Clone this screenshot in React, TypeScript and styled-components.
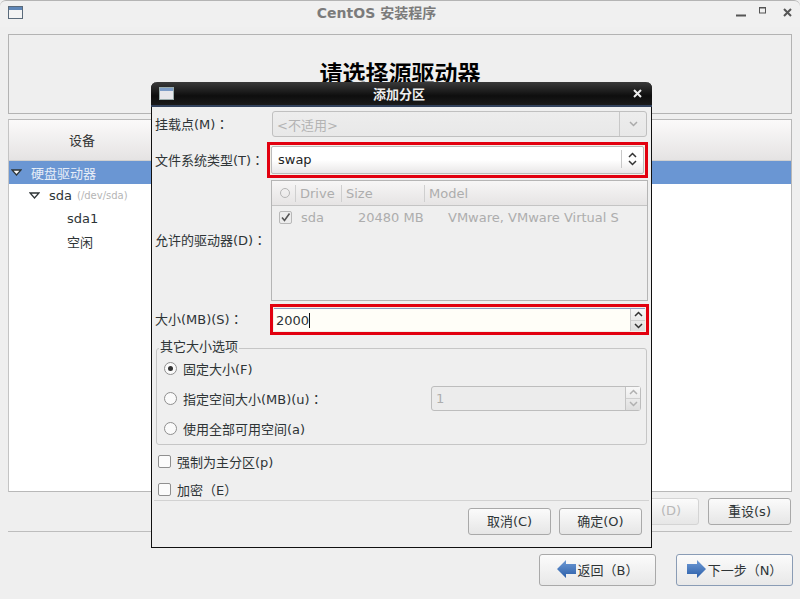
import React from "react";
import styled, { createGlobalStyle } from "styled-components";

const Global = createGlobalStyle`
  html, body { margin: 0; padding: 0; background: #efefef; }
  body { font-family: "DejaVu Sans", "Noto Sans CJK SC", sans-serif; font-size: 13px; color: #2e3436; }
  * { box-sizing: border-box; }
`;

const Screen = styled.div`
  position: relative;
  width: 800px;
  height: 599px;
  overflow: hidden;
  background: #efefef;
  display: flex;
  flex-direction: column;
`;

const TitleBar = styled.div`
  height: 27px;
  flex: none;
  border-top: 1px solid #b4b4b4;
  border-radius: 6px 6px 0 0;
  display: flex;
  align-items: center;
  padding: 0 8px 4px;
  background: #f0f0f0;
`;
const TitleText = styled.div`
  flex: 1;
  text-align: center;
  font-weight: bold;
  color: #7b7b7b;
  font-size: 14px;
  padding-right: 6px;
`;
const WinButtons = styled.div`
  display: flex;
  align-items: center;
  gap: 0;
  color: #555;
`;

const Content = styled.div`
  flex: 1;
  display: flex;
  flex-direction: column;
  padding: 7px 8px 0;
`;
const Banner = styled.div`
  height: 80px;
  flex: none;
  border: 1px solid #b3b3b3;
  display: flex;
  align-items: flex-end;
  justify-content: center;
  padding-bottom: 25px;
`;
const Heading = styled.h1`
  margin: 0;
  font-size: 23px;
  line-height: 28px;
  font-weight: bold;
  color: #000;
`;
const TreePanel = styled.div`
  margin-top: 5px;
  height: 373px;
  flex: none;
  border: 1px solid #b8b8b8;
  border-left-color: #c4c4c4;
  background: #fff;
`;
const ColumnHeader = styled.div`
  height: 41px;
  padding: 0 0 2px 60px;
  display: flex;
  align-items: center;
  background: linear-gradient(#fbfafa, #e5e3e3);
  border-bottom: 1px solid #d0d0d0;
  color: #333;
`;
const TreeRow = styled.div<{ $selected?: boolean; $indent: number }>`
  height: 23px;
  display: flex;
  align-items: center;
  gap: 9px;
  padding-left: ${(p) => p.$indent}px;
  background: ${(p) => (p.$selected ? "#6a96d3" : "transparent")};
  color: ${(p) => (p.$selected ? "#e6edf7" : "#2e3436")};
`;
const DevPath = styled.span`
  font-size: 10px;
  color: #b5b5b5;
  margin-left: -4px;
`;
const ActionRow = styled.div`
  margin-top: 6px;
  height: 28px;
  flex: none;
  display: flex;
  justify-content: flex-end;
  gap: 9px;
  padding-right: 1px;
`;
const Button = styled.button<{ $width?: number; $disabled?: boolean }>`
  width: ${(p) => p.$width ?? 83}px;
  height: 27px;
  border: 1px solid ${(p) => (p.$disabled ? "#d4d4d4" : "#a9a9a9")};
  border-radius: 3px;
  background: linear-gradient(#fbfbfb, #e6e6e6);
  color: ${(p) => (p.$disabled ? "#b8b8b8" : "#2e3436")};
  font: inherit;
  padding: 0 0 2px ${(p) => (p.$disabled ? 27 : 0)}px;
  display: flex;
  align-items: center;
  justify-content: center;
`;
const Separator = styled.div`
  height: 1px;
  flex: none;
  margin-top: 5px;
  background: #bdbdbd;
`;
const NavRow = styled.div`
  margin-top: 22px;
  display: flex;
  justify-content: flex-end;
  gap: 20px;
  margin-right: -1px;
`;
const NavButton = styled.button<{ $focus?: boolean }>`
  width: 117px;
  height: 32px;
  border: 1px solid ${(p) => (p.$focus ? "#8a9cb5" : "#a9a9a9")};
  border-radius: 3px;
  background: linear-gradient(#fbfbfb, #e8e8e8);
  color: #2e3436;
  font: inherit;
  padding: 0 0 2px;
  display: flex;
  align-items: center;
  justify-content: center;
  gap: 2px;
`;

const Dialog = styled.div`
  position: absolute;
  left: 151px;
  top: 82px;
  width: 501px;
  height: 466px;
  border: 1px solid #111;
  border-top: none;
  border-radius: 6px 6px 0 0;
  background: #efefef;
  display: flex;
  flex-direction: column;
`;
const DialogTitle = styled.div`
  height: 25px;
  flex: none;
  margin: 0 -1px;
  border-radius: 6px 6px 0 0;
  background: linear-gradient(#3a3a3a, #0e0e0e 60%, #1a1a1a);
  border-bottom: 2px solid #33435e;
  display: flex;
  align-items: center;
  padding: 0 10px 0 8px;
  color: #eee;
  font-weight: bold;
  font-size: 13px;
`;
const DialogTitleText = styled.div`
  flex: 1;
  text-align: center;
  padding-right: 9px;
`;
const DialogBody = styled.div`
  flex: 1;
  display: flex;
  flex-direction: column;
`;
const FormRow = styled.div<{ $h: number; $top: number }>`
  height: ${(p) => p.$h}px;
  margin-top: ${(p) => p.$top}px;
  flex: none;
  display: grid;
  grid-template-columns: 112px 381px;
  align-items: center;
  padding-left: 3px;
`;
const Label = styled.label`
  color: #2e3436;
  white-space: nowrap;
  padding-bottom: 2px;
`;
const Colon = styled.span`
  font-family: "Noto Sans CJK TC", sans-serif;
`;
const DisabledCombo = styled.div`
  height: 26px;
  margin: 0 1px 0 5px;
  border: 1px solid #c0c0c0;
  border-radius: 3px;
  background: linear-gradient(#ededed, #e8e8e8);
  display: flex;
  align-items: center;
  justify-content: space-between;
  padding-left: 4px;
  color: #b3b3b3;
`;
const ComboArrow = styled.div`
  width: 27px;
  height: 100%;
  border-left: 1px solid #c8c8c8;
  display: flex;
  align-items: center;
  justify-content: center;
`;
const RedFrame = styled.div<{ $h: number; $ml: number; $mr?: number }>`
  height: ${(p) => p.$h}px;
  margin-left: ${(p) => p.$ml}px;
  margin-right: ${(p) => p.$mr ?? 0}px;
  border: 3px solid #e2000f;
  padding: 1px;
  background: #f3efe6;
`;
const ComboBox = styled.div`
  height: 100%;
  border: 1px solid #bbb;
  border-radius: 2px;
  background: linear-gradient(#ffffff, #ffffff 50%, #e9e7e7);
  display: flex;
  align-items: center;
  justify-content: space-between;
  padding: 0 0 2px 6px;
  color: #222;
`;
const ComboSpin = styled.div`
  width: 22px;
  height: 18px;
  border-left: 1px solid #c8c8c8;
  display: flex;
  align-items: center;
  justify-content: center;
`;
const DriveList = styled.div`
  height: 121px;
  margin-left: 4px;
  border: 1px solid #b5b5b5;
  background: #efefef;
`;
const DriveHead = styled.div`
  height: 25px;
  display: grid;
  grid-template-columns: 23px 46px 83px 1fr;
  align-items: center;
  background: linear-gradient(#f7f6f6, #e6e4e4);
  border-bottom: 1px solid #c4c4c4;
  color: #adadad;
`;
const HeadCell = styled.div`
  height: 17px;
  line-height: 17px;
  padding-left: 4px;
  border-left: 1px solid #cfcfcf;
`;
const HeadCheck = styled.div`
  display: flex;
  justify-content: center;
  padding-left: 3px;
`;
const SmallCircle = styled.span`
  width: 10px;
  height: 10px;
  border: 1px solid #b5b5b5;
  border-radius: 50%;
`;
const DriveRow = styled.div`
  height: 23px;
  display: grid;
  grid-template-columns: 29px 57px 90px 1fr;
  align-items: center;
  padding-left: 0;
  color: #adadad;
  white-space: nowrap;
  overflow: hidden;
`;
const CheckCell = styled.div`
  padding-left: 7px;
  display: flex;
`;
const CheckBox = styled.span<{ $disabled?: boolean }>`
  width: 13px;
  height: 13px;
  flex: none;
  border: 1px solid ${(p) => (p.$disabled ? "#b8b8b8" : "#8f8f8f")};
  border-radius: 2px;
  background: ${(p) => (p.$disabled ? "#ececec" : "#fbfbfb")};
  display: flex;
  align-items: center;
  justify-content: center;
`;
const SpinInput = styled.div`
  height: 100%;
  display: flex;
  align-items: stretch;
  background: #fffef8;
  border-top: 1px solid #8d9cc4;
`;
const InputText = styled.div`
  flex: 1;
  display: flex;
  align-items: center;
  padding-left: 2px;
  color: #2e3436;
`;
const Caret = styled.span`
  width: 1px;
  height: 15px;
  background: #111;
`;
const SpinColumn = styled.div<{ $w: number; $disabled?: boolean }>`
  width: ${(p) => p.$w}px;
  flex: none;
  display: flex;
  flex-direction: column;
  border-left: 1px solid ${(p) => (p.$disabled ? "#c4c4c4" : "#c8c8c8")};
  background: linear-gradient(#f8f8f8, #dedede);
`;
const SpinPart = styled.div`
  flex: 1;
  display: flex;
  align-items: center;
  justify-content: center;
  & + & { border-top: 1px solid #cfcfcf; }
`;
const OptionsGroup = styled.div`
  position: relative;
  margin: 13px 4px 0 4px;
  height: 97px;
  flex: none;
  border: 1px solid #c6c6c6;
  border-radius: 3px;
  padding-top: 4px;
`;
const Legend = styled.span`
  position: absolute;
  left: 2px;
  top: -10px;
  padding: 0 1px;
  line-height: 16px;
  background: #efefef;
  color: #2e3436;
`;
const RadioRow = styled.div`
  height: 30px;
  padding-left: 7px;
  display: flex;
  align-items: center;
  gap: 6px;
`;
const Radio = styled.span<{ $on?: boolean }>`
  width: 13px;
  height: 13px;
  flex: none;
  border-radius: 50%;
  border: 1px solid #8f8f8f;
  background: #fafafa;
  display: flex;
  align-items: center;
  justify-content: center;
  &::after {
    content: "";
    display: ${(p) => (p.$on ? "block" : "none")};
    width: 5px;
    height: 5px;
    border-radius: 50%;
    background: #333;
  }
`;
const RadioLabel = styled.span`
  width: 242px;
  flex: none;
`;
const DisabledSpin = styled.div`
  width: 210px;
  height: 25px;
  border: 1px solid #bdbdbd;
  border-radius: 3px;
  background: #ececec;
  display: flex;
  align-items: stretch;
  color: #adadad;
`;
const DisabledValue = styled.div`
  flex: 1;
  display: flex;
  align-items: center;
  padding-left: 4px;
`;
const CheckRow = styled.div<{ $h: number; $top: number }>`
  height: ${(p) => p.$h}px;
  margin-top: ${(p) => p.$top}px;
  flex: none;
  padding-left: 6px;
  display: flex;
  align-items: center;
  gap: 6px;
`;
const DialogSep = styled.div`
  height: 1px;
  flex: none;
  background: #d2d2d2;
  margin: 0 2px;
`;
const DialogActions = styled.div`
  padding: 7px 9px 0 0;
  display: flex;
  justify-content: flex-end;
  gap: 8px;
`;

const WindowIcon = ({ dark }: { dark?: boolean }) => (
  <svg width="15" height="13" viewBox="0 0 15 13">
    <rect x="0.5" y="0.5" width="14" height="12" fill={dark ? "#e6e6ea" : "#f3f3f3"} stroke={dark ? "#9aa" : "#5a6a7a"} />
    <rect x="1" y="1" width="13" height="3" fill={dark ? "#7d9cc6" : "#5f87b8"} />
  </svg>
);
const Triangle = () => (
  <svg width="11" height="7" viewBox="0 0 11 7">
    <path d="M1 1h9L5.5 6z" fill="#fff" stroke="#2e3436" strokeWidth="1.3" />
  </svg>
);
const Chevron = ({ up, color = "#333", w = 9 }: { up?: boolean; color?: string; w?: number }) => (
  <svg width={w} height="6" viewBox="0 0 9 6">
    <path d={up ? "M1 5l3.5-3.5L8 5" : "M1 1l3.5 3.5L8 1"} fill="none" stroke={color} strokeWidth="1.5" />
  </svg>
);
const Tick = () => (
  <svg width="11" height="11" viewBox="0 0 11 11">
    <path d="M2 5.5l2.5 3L9.5 1.5" fill="none" stroke="#555" strokeWidth="1.6" />
  </svg>
);
const Arrow = ({ right }: { right?: boolean }) => (
  <svg width="19" height="18" viewBox="0 0 19 18" style={right ? { transform: "scaleX(-1)" } : undefined}>
    <defs>
      <linearGradient id="navArrow" x1="0" x2="0" y1="0" y2="1">
        <stop offset="0" stopColor="#6f9bd6" />
        <stop offset="1" stopColor="#2a5ea8" />
      </linearGradient>
    </defs>
    <path d="M0 9l9-9v4h10v10H9v4z" fill="url(#navArrow)" />
  </svg>
);
const CloseX = ({ color, size }: { color: string; size: number }) => (
  <svg width={size} height={size} viewBox="0 0 9 9">
    <path d="M1 1l7 7M8 1L1 8" stroke={color} strokeWidth="2" />
  </svg>
);

export default function App() {
  return (
    <Screen>
      <Global />
      <TitleBar>
        <WindowIcon />
        <TitleText>CentOS 安装程序</TitleText>
        <WinButtons>
          <svg width="10" height="10" viewBox="0 0 10 10" style={{ marginRight: 13 }}><path d="M0 8.5h10" stroke="#555" strokeWidth="2" /></svg>
          <svg width="7" height="7" viewBox="0 0 7 7" style={{ marginRight: 17, marginBottom: 4 }}><rect x="0.5" y="0.5" width="6" height="5.5" fill="none" stroke="#555" /><path d="M0 1h7" stroke="#555" /></svg>
          <CloseX color="#555" size={9} />
        </WinButtons>
      </TitleBar>
      <Content>
        <Banner>
          <Heading>请选择源驱动器</Heading>
        </Banner>
        <TreePanel>
          <ColumnHeader>设备</ColumnHeader>
          <TreeRow $selected $indent={2}><Triangle />硬盘驱动器</TreeRow>
          <TreeRow $indent={20}><Triangle />sda <DevPath>(/dev/sda)</DevPath></TreeRow>
          <TreeRow $indent={58}>sda1</TreeRow>
          <TreeRow $indent={58}>空闲</TreeRow>
        </TreePanel>
        <ActionRow>
          <Button $disabled>(D)</Button>
          <Button>重设(s)</Button>
        </ActionRow>
        <Separator />
        <NavRow>
          <NavButton><Arrow />返回（B）</NavButton>
          <NavButton $focus><Arrow right />下一步（N）</NavButton>
        </NavRow>
      </Content>

      <Dialog>
        <DialogTitle>
          <WindowIcon dark />
          <DialogTitleText>添加分区</DialogTitleText>
          <CloseX color="#eee" size={9} />
        </DialogTitle>
        <DialogBody>
          <FormRow $h={26} $top={4}>
            <Label>挂载点(M)<Colon>：</Colon></Label>
            <DisabledCombo>
              &lt;不适用&gt;
              <ComboArrow><Chevron color="#aaa" w={11} /></ComboArrow>
            </DisabledCombo>
          </FormRow>
          <FormRow $h={36} $top={5}>
            <Label>文件系统类型(T)<Colon>：</Colon></Label>
            <RedFrame $h={36} $ml={0}>
              <ComboBox>
                swap
                <ComboSpin>
                  <svg width="9" height="14" viewBox="0 0 9 14">
                    <path d="M1 5l3.5-3.5L8 5M1 9l3.5 3.5L8 9" fill="none" stroke="#333" strokeWidth="1.5" />
                  </svg>
                </ComboSpin>
              </ComboBox>
            </RedFrame>
          </FormRow>
          <FormRow $h={121} $top={2}>
            <Label>允许的驱动器(D)<Colon>：</Colon></Label>
            <DriveList>
              <DriveHead>
                <HeadCheck><SmallCircle /></HeadCheck>
                <HeadCell>Drive</HeadCell>
                <HeadCell>Size</HeadCell>
                <HeadCell>Model</HeadCell>
              </DriveHead>
              <DriveRow>
                <CheckCell><CheckBox $disabled><Tick /></CheckBox></CheckCell>
                <span>sda</span>
                <span>20480 MB</span>
                <span>VMware, VMware Virtual S</span>
              </DriveRow>
            </DriveList>
          </FormRow>
          <FormRow $h={31} $top={3}>
            <Label>大小(MB)(S)<Colon>：</Colon></Label>
            <RedFrame $h={31} $ml={3} $mr={-1}>
              <SpinInput>
                <InputText>2000<Caret /></InputText>
                <SpinColumn $w={15}>
                  <SpinPart><Chevron up /></SpinPart>
                  <SpinPart><Chevron /></SpinPart>
                </SpinColumn>
              </SpinInput>
            </RedFrame>
          </FormRow>
          <OptionsGroup>
            <Legend>其它大小选项</Legend>
            <RadioRow><Radio $on /><span>固定大小(F)</span></RadioRow>
            <RadioRow>
              <Radio />
              <RadioLabel>指定空间大小(MB)(u)<Colon>：</Colon></RadioLabel>
              <DisabledSpin>
                <DisabledValue>1</DisabledValue>
                <SpinColumn $w={15} $disabled>
                  <SpinPart><Chevron up color="#b0b0b0" /></SpinPart>
                  <SpinPart><Chevron color="#b0b0b0" /></SpinPart>
                </SpinColumn>
              </DisabledSpin>
            </RadioRow>
            <RadioRow><Radio /><span>使用全部可用空间(a)</span></RadioRow>
          </OptionsGroup>
          <CheckRow $h={26} $top={3}><CheckBox />强制为主分区(p)</CheckRow>
          <CheckRow $h={22} $top={4}><CheckBox />加密（E）</CheckRow>
          <DialogSep />
          <DialogActions>
            <Button>取消(C)</Button>
            <Button>确定(O)</Button>
          </DialogActions>
        </DialogBody>
      </Dialog>
    </Screen>
  );
}
